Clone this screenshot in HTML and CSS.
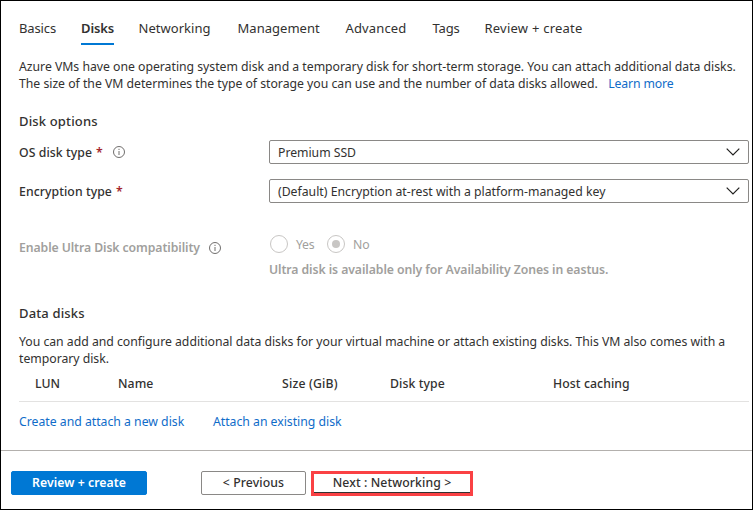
FILE: index.html
```
<!DOCTYPE html>
<html lang="en">
<head>
<meta charset="utf-8">
<title>Create a virtual machine</title>
<link rel="stylesheet" href="styles.css">
</head>
<body>
<div class="frame">
  <nav class="tabs">
    <a class="tab basics">Basics</a>
    <a class="tab active">Disks</a>
    <a class="tab networking">Networking</a>
    <a class="tab management">Management</a>
    <a class="tab advanced">Advanced</a>
    <a class="tab tags">Tags</a>
    <a class="tab review">Review + create</a>
  </nav>
  <main class="content">
    <p class="text intro">Azure VMs have one operating system disk and a temporary disk for short-term storage. You can attach additional data disks.<br>The size of the VM determines the type of storage you can use and the number of data disks allowed. <a class="link learn">Learn more</a></p>
    <h2 class="heading">Disk options</h2>
    <div class="row">
      <div class="label">OS disk type <span class="required">*</span>
        <svg class="info" viewBox="0 0 12 12"><circle cx="6" cy="6" r="5.5"/><path d="M6 5v4M6 2.8v1.2"/></svg>
      </div>
      <div class="select"><span class="premium">Premium SSD</span>
        <svg class="chevron" viewBox="0 0 14 8"><path d="M.7 .7L7 7L13.3 .7"/></svg>
      </div>
    </div>
    <div class="row">
      <div class="label">Encryption type <span class="required">*</span></div>
      <div class="select"><span>(Default) Encryption at-rest with a platform-managed key</span>
        <svg class="chevron" viewBox="0 0 14 8"><path d="M.7 .7L7 7L13.3 .7"/></svg>
      </div>
    </div>
    <div class="row ultra">
      <div class="label disabled">Enable Ultra Disk compatibility
        <svg class="info" viewBox="0 0 12 12"><circle cx="6" cy="6" r="5.5"/><path d="M6 5v4M6 2.8v1.2"/></svg>
      </div>
      <div class="choice">
        <div class="radios">
          <span class="radio"></span><span class="option yes">Yes</span>
          <span class="radio checked"></span><span class="option">No</span>
        </div>
        <div class="note">Ultra disk is available only for Availability Zones in eastus.</div>
      </div>
    </div>
    <h2 class="heading data">Data disks</h2>
    <p class="text">You can add and configure additional data disks for your virtual machine or attach existing disks. This VM also comes with a<br>temporary disk.</p>
    <div class="table-head">
      <span>LUN</span><span>Name</span><span class="size">Size (GiB)</span><span>Disk type</span><span>Host caching</span>
    </div>
    <div class="links"><a class="link create">Create and attach a new disk</a><a class="link attach">Attach an existing disk</a></div>
  </main>
  <footer class="footer">
    <button class="button primary">Review + create</button>
    <button class="button previous">&lt; Previous</button>
    <div class="highlight"><button class="button next">Next : Networking &gt;</button></div>
  </footer>
</div>
</body>
</html>
```
FILE: styles.css
```
* { box-sizing: border-box; }
body { margin: 0; background: #fff; color: #323130; font: 12.25px/17px "Noto Sans", "Open Sans", sans-serif; }
.frame { width: 753px; height: 510px; border: 1px solid #000; display: flex; flex-direction: column; overflow: hidden; }
.tabs { display: grid; grid-template-columns: 62px 57.5px 99px 108px 87px 52px 110px; padding: 17px 0 0 18px; height: 57px; flex: none; font-size: 13px; line-height: 20px; letter-spacing: .03px; }
.tab { justify-self: start; white-space: nowrap; height: 27px; }
.basics { letter-spacing: -.13px; }
.active { font-weight: 600; letter-spacing: -.13px; width: 33px; border-bottom: 2px solid #0078d4; }
.advanced { letter-spacing: .15px; }
.tags { letter-spacing: -.15px; }
.review { letter-spacing: .23px; }
.content { padding-left: 18px; height: 392px; flex: none; }
.text { margin: 0; white-space: nowrap; letter-spacing: -.02px; }
.link { color: #0f6cc9; }
.learn { margin-left: 7.5px; letter-spacing: -.15px; }
.heading { margin: 20px 0 10px; font-size: 13px; line-height: 18px; font-weight: 500; letter-spacing: .15px; }
.row { display: grid; grid-template-columns: 250px 480px; height: 24px; margin-bottom: 15px; }
.label { display: flex; align-items: center; font-weight: 500; letter-spacing: .07px; white-space: nowrap; }
.required { color: #a4262c; margin-left: 4px; font-weight: 600; }
.info { width: 12px; height: 12px; margin-left: 10px; fill: none; stroke: #605e5c; stroke-width: .9; }
.select { display: flex; align-items: center; justify-content: space-between; border: 1px solid #8a8886; border-radius: 2px; padding: 0 8px 0 8px; }
.premium { letter-spacing: -.03px; }
.chevron { width: 14px; height: 8px; fill: none; stroke: #201f1e; stroke-width: 1.2; }
.ultra { margin-top: 32px; height: 46px; margin-bottom: 0; }
.disabled { height: 25px; color: #a19f9d; font-weight: 600; letter-spacing: -.09px; }
.disabled .info { margin-left: 9px; }
.radios { display: flex; align-items: center; height: 18px; color: #a19f9d; }
.radio { width: 18px; height: 18px; border: 1px solid #c8c6c4; border-radius: 50%; margin-left: 1px; display: grid; place-items: center; }
.checked::before { content: ""; width: 8px; height: 8px; border-radius: 50%; background: #c8c6c4; }
.option { margin-left: 8px; }
.yes { width: 22px; margin-right: 8px; letter-spacing: -.3px; }
.note { margin-top: 8px; color: #a19f9d; font-weight: 600; white-space: nowrap; letter-spacing: -.08px; }
.data { margin: 23px 0 11px; }
.table-head { display: grid; grid-template-columns: 83px 164px 108px 163px 1fr; padding: 8px 0 9px 16px; width: 730px; height: 35px; font-weight: 500; letter-spacing: .08px; border-bottom: 1px solid #e3e2e1; }
.size { letter-spacing: .18px; }
.links { display: flex; gap: 28px; padding-top: 11px; }
.create { letter-spacing: -.01px; width: 166px; white-space: nowrap; }
.attach { letter-spacing: -.02px; }
.footer { flex: 1; display: flex; align-items: flex-start; border-top: 1px solid #b3b0ad; padding: 20px 0 0 10px; }
.button { height: 24px; padding: 0; font: 500 12.25px/20px "Noto Sans", "Open Sans", sans-serif; color: #323130; background: #fff; border: 1px solid #8a8886; border-radius: 2px; letter-spacing: .1px; }
.primary { width: 136px; color: #fff; background: #0078d4; border-color: #0078d4; font-weight: 600; letter-spacing: .06px; }
.previous { width: 105px; margin-left: 54px; }
.highlight { width: 162px; height: 25px; margin-left: 5px; border: 3px solid #fa4144; }
.next { display: block; width: 100%; height: 19px; border: 0; border-bottom: 1px solid #323130; border-radius: 0; line-height: 17px; padding-bottom: 1px; }
```
